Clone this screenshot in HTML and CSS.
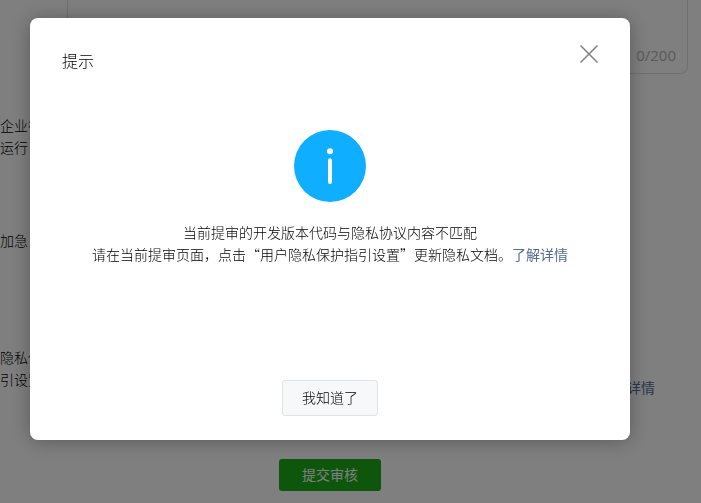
FILE: index.html
```html
<!DOCTYPE html>
<html lang="zh-CN">
<head>
<meta charset="utf-8">
<title>提交审核</title>
<link rel="stylesheet" href="styles.css">
</head>
<body>
<form class="page">
  <div class="row row-notes">
    <div class="field">
      <textarea class="notes" aria-label="备注" maxlength="200"></textarea>
      <span class="counter">0/200</span>
    </div>
  </div>
  <div class="row row-company">企业征<br>运行</div>
  <div class="row row-urgent">加急</div>
  <div class="row row-privacy">
    <span>隐私保<br>引设置</span>
    <a class="link more" href="#">了解详情</a>
  </div>
  <div class="actions"><button class="submit" type="button">提交审核</button></div>
</form>
<div class="mask">
  <section class="dialog" role="dialog" aria-modal="true" aria-labelledby="dialog-title">
    <header class="dialog-head">
      <h1 class="title" id="dialog-title">提示</h1>
      <button class="close" type="button" aria-label="关闭">
        <svg width="18" height="18" viewBox="0 0 18 18"><path d="M.5 .5 17.5 17.5M17.5 .5 .5 17.5" fill="none" stroke="#808080" stroke-width="1.5"/></svg>
      </button>
    </header>
    <div class="dialog-body">
      <svg class="info" width="72" height="72" viewBox="0 0 72 72" aria-hidden="true">
        <circle cx="36" cy="36" r="36" fill="#10aeff"/>
        <circle cx="36" cy="21.3" r="3" fill="#fff"/>
        <path d="M34.2 30a1.8 1.8 0 0 1 3.6 0l.2 1V52a2 2 0 0 1-4 0V31z" fill="#fff"/>
      </svg>
      <p class="message">当前提审的开发版本代码与隐私协议内容不匹配<br>请在当前提审页面，点击“用户隐私保护指引设置”更新隐私文档。<a class="link" href="#">了解详情</a></p>
    </div>
    <footer class="dialog-foot"><button class="confirm" type="button">我知道了</button></footer>
  </section>
</div>
</body>
</html>
```
FILE: styles.css
```css
* {
  box-sizing: border-box;
}

body {
  margin: 0;
  background: #fff;
  color: #000;
  font: 14px/22px "Noto Sans CJK SC", sans-serif;
  font-weight: 300;
  overflow: hidden;
}

button {
  font: inherit;
  cursor: pointer;
}

.link {
  color: #576b95;
  font-weight: 400;
  text-decoration: none;
}

.row-notes {
  padding: 0 13px 0 67px;
}

.field {
  position: relative;
  display: flex;
}

.notes {
  flex: 1;
  height: 74px;
  border: 1px solid #e0e0e0;
  border-top: 0;
  border-radius: 0 0 8px 8px;
  resize: none;
}

.counter {
  position: absolute;
  right: 12px;
  bottom: 8px;
  color: #b2b2b2;
  font: 15px/22px "Open Sans", sans-serif;
}

.row-company {
  padding-top: 40px;
}

.row-urgent {
  padding-top: 71px;
}

.row-privacy {
  display: flex;
  justify-content: space-between;
  align-items: flex-start;
  padding: 95px 46px 0 0;
}

.more {
  padding-top: 30px;
}

.actions {
  display: flex;
  justify-content: center;
  padding: 61px 41px 12px 0;
}

.submit {
  height: 32px;
  padding: 0 23px 2px;
  border: 0;
  border-radius: 3px;
  background: #1aad19;
  color: #fff;
  font-weight: 400;
}

.mask {
  position: fixed;
  inset: 0;
  padding: 18px 71px 63px 30px;
  background: rgba(0, 0, 0, 0.5);
}

.dialog {
  display: flex;
  flex-direction: column;
  height: 100%;
  padding: 24px 32px;
  border-radius: 8px;
  background: #fff;
  box-shadow: 0 1px 20px rgba(0, 0, 0, 0.3);
}

.dialog-head {
  display: flex;
  justify-content: space-between;
  align-items: flex-start;
}

.title {
  margin: 6px 0 0;
  font-size: 16px;
  font-weight: 300;
  line-height: 24px;
}

.close {
  display: flex;
  padding: 3px 0;
  border: 0;
  background: none;
}

.dialog-body {
  flex: 1;
  padding-top: 58px;
  text-align: center;
}

.info {
  display: block;
  margin: 0 auto 19px;
}

.message {
  margin: 0;
}

.dialog-foot {
  display: flex;
  justify-content: center;
}

.confirm {
  height: 36px;
  padding: 0 19px 2px;
  border: 1px solid #e0e3e8;
  border-radius: 3px;
  background: #f6f8fa;
  color: #000;
}
```
